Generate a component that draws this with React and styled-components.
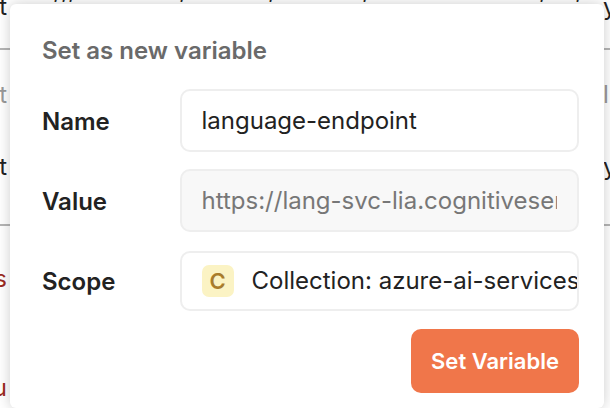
import React from "react";
import styled, { createGlobalStyle } from "styled-components";

const Global = createGlobalStyle`
  html, body { margin: 0; padding: 0; background: #fff; }
  body { font-family: Inter, "Liberation Sans", sans-serif; }
  * { box-sizing: border-box; }
`;

const Page = styled.div`
  position: relative;
  width: 610px;
  height: 408px;
  overflow: hidden;
  background: #fff;
`;

const Backdrop = styled.div`
  display: flex;
  flex-direction: column;
  height: 408px;
  font-size: 24px;
  line-height: 28px;
  color: #222;
`;

const FragmentRow = styled.div`
  display: flex;
  flex: none;
  height: 28px;
  margin: -24px 0 -11px;
  white-space: nowrap;
`;

const Fragment = styled.span`
  flex: none;
  width: ${(p) => p.$width}px;
`;

const TextRow = styled.div`
  display: flex;
  justify-content: space-between;
  height: ${(p) => p.$height}px;
  flex: none;
  color: ${(p) => p.$color || "#222"};
  white-space: nowrap;
`;

const EdgeGlyph = styled.span`
  width: 7px;
  overflow: hidden;
  display: flex;
  justify-content: ${(p) => (p.$right ? "flex-start" : "flex-end")};
`;

const Rule = styled.div`
  height: 2px;
  flex: none;
  margin-bottom: ${(p) => p.$after}px;
  background: #b5b5b5;
`;

const Modal = styled.section`
  position: absolute;
  left: 10px;
  top: 4px;
  width: 594px;
  height: 404px;
  padding: 32px 25px 14px 32px;
  background: #fff;
  border-radius: 6px;
  box-shadow: 0 0 14px rgba(0, 0, 0, 0.2);
  display: flex;
  flex-direction: column;
`;

const Title = styled.h2`
  margin: 0 0 22.5px;
  font-size: 24px;
  line-height: 30px;
  font-weight: 600;
  color: #6a6a6a;
`;

const Form = styled.div`
  display: grid;
  grid-template-columns: 137.5px 399.5px;
  row-gap: 17px;
  align-items: center;
`;

const Label = styled.label`
  padding-top: ${(p) => p.$offset || 2}px;
  font-size: 24px;
  font-weight: 600;
  color: #222;
`;

const Input = styled.input`
  width: 100%;
  height: 63px;
  padding: 0 20px;
  border: 2px solid #eee;
  border-radius: 10px;
  outline: none;
  font: 400 24px Inter, sans-serif;
  color: ${(p) => (p.readOnly ? "#777" : "#222")};
  background: ${(p) => (p.readOnly ? "#f8f8f8" : "#fff")};
`;

const ScopeBox = styled.div`
  height: 60px;
  margin-top: 2px;
  padding: 0 0 0 20px;
  border: 2px solid #eee;
  border-radius: 10px;
  display: flex;
  align-items: center;
  gap: 18px;
  overflow: hidden;
  white-space: nowrap;
  font-size: 24px;
  color: #222;
`;

const Chip = styled.span`
  flex: none;
  width: 32px;
  height: 32px;
  border-radius: 7px;
  background: #fbf3c4;
  color: #a97c2b;
  font-size: 22px;
  font-weight: 600;
  display: flex;
  align-items: center;
  justify-content: center;
`;

const Actions = styled.div`
  display: flex;
  justify-content: flex-end;
  margin-top: 18px;
  width: 537px;
`;

const Button = styled.button`
  width: 168px;
  height: 64px;
  border: none;
  border-radius: 10px;
  background: #f0764a;
  color: #fff;
  font: 600 22px Inter, sans-serif;
`;

export default function App() {
  return (
    <Page>
      <Global />
      <Backdrop>
        <FragmentRow>
          <Fragment $width={53} />
          <Fragment $width={8}>,</Fragment>
          <Fragment $width={7}>,</Fragment>
          <Fragment $width={111}>,</Fragment>
          <Fragment $width={89}>,</Fragment>
          <Fragment $width={94}>,</Fragment>
          <Fragment $width={177}>,</Fragment>
          <Fragment $width={36}>,</Fragment>
          <Fragment $width={10}>,</Fragment>
        </FragmentRow>
        <TextRow $height={55}>
          <EdgeGlyph>t</EdgeGlyph>
          <EdgeGlyph $right>y</EdgeGlyph>
        </TextRow>
        <Rule $after={31} />
        <TextRow $height={72} $color="#999">
          <EdgeGlyph>t</EdgeGlyph>
          <EdgeGlyph $right>l</EdgeGlyph>
        </TextRow>
        <TextRow $height={71}>
          <EdgeGlyph>t</EdgeGlyph>
          <EdgeGlyph $right>y</EdgeGlyph>
        </TextRow>
        <Rule $after={39} />
        <TextRow $height={109} $color="#9c2a22">
          <EdgeGlyph>s</EdgeGlyph>
          <span />
        </TextRow>
        <TextRow $height={28} $color="#9c2a22">
          <EdgeGlyph>u</EdgeGlyph>
          <span />
        </TextRow>
      </Backdrop>
      <Modal>
        <Title>Set as new variable</Title>
        <Form>
          <Label>Name</Label>
          <Input readOnly={false} defaultValue="language-endpoint" />
          <Label>Value</Label>
          <Input readOnly value="https://lang-svc-lia.cognitiveservices.azure.com/" />
          <Label $offset={4}>Scope</Label>
          <ScopeBox>
            <Chip>C</Chip>
            Collection: azure-ai-services
          </ScopeBox>
        </Form>
        <Actions>
          <Button>Set Variable</Button>
        </Actions>
      </Modal>
    </Page>
  );
}
